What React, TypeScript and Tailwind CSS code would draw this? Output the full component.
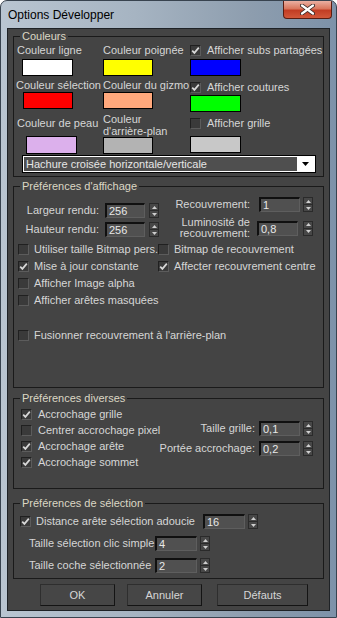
import React from 'react';

const labelCls = 'text-[#d6d6d6]';

function Check({ on }: { on?: boolean }) {
  return (
    <span className="w-[11px] h-[11px] shrink-0 border border-t-[#202020] border-l-[#202020] border-r-[#5c5c5c] border-b-[#5c5c5c] bg-[#3a3a3a] flex items-center justify-center">
      {on && (
        <svg width="9" height="9" viewBox="0 0 9 9">
          <path d="M1.2 4.6 L3.4 6.9 L7.8 1.6" stroke="#d8d8d8" strokeWidth="1.7" fill="none" />
        </svg>
      )}
    </span>
  );
}

function CheckRow({ on, text, gap = 'gap-[5px]', className = '' }: { on?: boolean; text: string; gap?: string; className?: string }) {
  return (
    <div className={`flex items-center whitespace-nowrap ${gap} ${className}`}>
      <Check on={on} />
      <span className={labelCls}>{text}</span>
    </div>
  );
}

function Spin({ className = '' }: { className?: string }) {
  return (
    <span className={`w-[10px] h-[15px] shrink-0 border border-[#2a2a2a] bg-[#474747] flex flex-col ${className}`}>
      <span className="flex-1 flex items-center justify-center border-b border-[#2a2a2a]">
        <svg width="5" height="3" viewBox="0 0 5 3"><path d="M0 3 L2.5 0 L5 3Z" fill="#cfcfcf" /></svg>
      </span>
      <span className="flex-1 flex items-center justify-center">
        <svg width="5" height="3" viewBox="0 0 5 3"><path d="M0 0 L5 0 L2.5 3Z" fill="#cfcfcf" /></svg>
      </span>
    </span>
  );
}

function Field({ value, w, className = '' }: { value: string; w: string; className?: string }) {
  return (
    <span
      className={`${w} h-[15px] shrink-0 border-t-2 border-l-2 border-r border-b border-t-[#101010] border-l-[#101010] border-r-[#5e5e5e] border-b-[#5e5e5e] bg-[#505050] text-[#e8e8e8] pl-[2px] leading-[12px] ${className}`}
    >
      {value}
    </span>
  );
}

function Swatch({ color, className = '' }: { color: string; className?: string }) {
  return <div className={`h-[17px] border border-black ${color} ${className}`} />;
}

function Group({ title, className, children }: { title: string; className: string; children: React.ReactNode }) {
  return (
    <fieldset className={`mx-[5px] border border-[#1a1a1a] ${className}`}>
      <legend className="ml-[6px] px-[2px] leading-[14px] text-[#dcd7c4]">{title}</legend>
      {children}
    </fieldset>
  );
}

function Btn({ text, w, className = '' }: { text: string; w: string; className?: string }) {
  return (
    <div
      className={`${w} h-[22px] flex items-center justify-center border border-t-[#2e2e2e] border-l-[#2e2e2e] border-r-[#141414] border-b-[#141414] bg-[#464646] text-[#d6d6d6] ${className}`}
    >
      {text}
    </div>
  );
}

export default function App() {
  return (
    <div className="w-[337px] h-[618px] rounded-t-[7px] border border-[#38434f] bg-[linear-gradient(to_right,#b9c5d1,#a6b4c2_40%,#8d9dae_75%,#7d92a9)] font-['Liberation_Sans',Arial,sans-serif] text-[11px] overflow-hidden">
      {/* title bar */}
      <div className="h-[27px] flex items-start justify-between">
        <div className="pl-[7px] pt-[7px] text-[12px] leading-[14px] text-black">Options Développer</div>
        <div className="mr-[4px] w-[49px] h-[18px] rounded-b-[4px] border border-t-0 border-[#5a1d12] bg-[linear-gradient(to_bottom,#eab0a2,#d9765d_45%,#c23d24_55%,#d2583a)] flex items-center justify-center">
          <svg width="15" height="11" viewBox="0 0 15 11">
            <path d="M2 1.5 L13 9.5 M13 1.5 L2 9.5" stroke="#3a2a28" strokeWidth="4" strokeLinecap="round" />
            <path d="M2 1.5 L13 9.5 M13 1.5 L2 9.5" stroke="#ffffff" strokeWidth="2.2" strokeLinecap="round" />
          </svg>
        </div>
      </div>

      {/* client area */}
      <div className="ml-[6px] w-[323px] h-[583px] border border-[#1e2226] bg-[#444444]">
        {/* Couleurs */}
        <Group title="Couleurs" className="h-[148px]">
          <div className="h-[111px] grid grid-cols-[87px_87px_1fr]">
            <div className="flex flex-col">
              <div className={`${labelCls} h-[13px] leading-[13px] mt-[1px] pl-[3px]`}>Couleur ligne</div>
              <Swatch color="bg-white" className="mt-[2px] ml-[8px] w-[51px]" />
              <div className={`${labelCls} h-[13px] leading-[13px] mt-[3px] pl-[2px] whitespace-nowrap`}>Couleur sélection</div>
              <Swatch color="bg-[#ff0000]" className="ml-[9px] w-[50px]" />
              <div className={`${labelCls} h-[13px] leading-[13px] mt-[8px] pl-[3px]`}>Couleur de peau</div>
              <Swatch color="bg-[#dcb0ec]" className="mt-[6px] ml-[12px] w-[51px] h-[18px]" />
            </div>
            <div className="flex flex-col">
              <div className={`${labelCls} h-[13px] leading-[13px] mt-[1px] pl-[2px] whitespace-nowrap`}>Couleur poignée</div>
              <Swatch color="bg-[#ffff00]" className="mt-[2px] ml-[2px] w-[50px]" />
              <div className={`${labelCls} h-[13px] leading-[13px] mt-[3px] pl-[2px] whitespace-nowrap`}>Couleur du gizmo</div>
              <Swatch color="bg-[#ffa87c]" className="ml-[2px] w-[50px]" />
              <div className={`${labelCls} leading-[12px] mt-[4px] pl-[2px]`}>
                Couleur
                <br />
                d'arrière-plan
              </div>
              <Swatch color="bg-[#b3b3b3]" className="mt-[0px] ml-[2px] w-[50px]" />
            </div>
            <div className="flex flex-col">
              <CheckRow on text="Afficher subs partagées" gap="gap-[6px]" className="h-[13px] mt-[1px] ml-[2px]" />
              <Swatch color="bg-[#0000ff]" className="mt-[2px] ml-[2px] w-[51px]" />
              <CheckRow on text="Afficher coutures" gap="gap-[6px]" className="h-[13px] mt-[5px] ml-[2px]" />
              <Swatch color="bg-[#00ff00]" className="mt-[1px] ml-[2px] w-[51px]" />
              <CheckRow text="Afficher grille" gap="gap-[6px]" className="h-[13px] mt-[5px] ml-[2px]" />
              <Swatch color="bg-[#c8c8c8]" className="mt-[6px] ml-[2px] w-[51px]" />
            </div>
          </div>
          <div className="mt-[1px] ml-[8px] w-[294px] h-[18px] border border-black flex">
            <div className="flex-1 border border-white border-r-0 bg-[#4f4f4f] text-[#e6e6e6] pl-[2px] leading-[14px]">
              Hachure croisée horizontale/verticale
            </div>
            <div className="w-[18px] border-y border-r border-white bg-white flex items-center justify-center">
              <svg width="7" height="4" viewBox="0 0 7 4"><path d="M0 0 L7 0 L3.5 4Z" fill="#000" /></svg>
            </div>
          </div>
        </Group>

        {/* Préférences d'affichage */}
        <Group title="Préférences d'affichage" className="mt-[2px] h-[209px]">
          <div className="flex h-[46px]">
            <div className="w-[150px] pt-[10px] flex flex-col gap-[4px]">
              <div className="flex items-center h-[15px]">
                <span className={`${labelCls} w-[85px] text-right`}>Largeur rendu:</span>
                <Field value="256" w="w-[40px]" className="ml-[6px]" />
                <Spin className="ml-[4px]" />
              </div>
              <div className="flex items-center h-[15px]">
                <span className={`${labelCls} w-[85px] text-right`}>Hauteur rendu:</span>
                <Field value="256" w="w-[40px]" className="ml-[6px]" />
                <Spin className="ml-[4px]" />
              </div>
            </div>
            <div className="pt-[4px] flex flex-col">
              <div className="flex items-center h-[15px]">
                <span className={`${labelCls} w-[86px] text-right`}>Recouvrement:</span>
                <Field value="1" w="w-[41px]" className="ml-[9px]" />
                <Spin className="ml-[3px]" />
              </div>
              <div className="flex items-center h-[22px] mt-[5px]">
                <span className={`${labelCls} w-[86px] text-right leading-[11px]`}>
                  Luminosité de
                  <br />
                  recouvrement:
                </span>
                <Field value="0,8" w="w-[41px]" className="ml-[7px]" />
                <Spin className="ml-[5px]" />
              </div>
            </div>
          </div>
          <div className="mt-[2px] grid grid-cols-[144px_1fr] auto-rows-[17px]">
            <CheckRow text="Utiliser taille Bitmap pers." className="ml-[4px]" />
            <CheckRow text="Bitmap de recouvrement" />
            <CheckRow on text="Mise à jour constante" className="ml-[4px]" />
            <CheckRow on text="Affecter recouvrement centre" />
            <CheckRow text="Afficher Image alpha" className="ml-[4px]" />
            <div />
            <CheckRow text="Afficher arêtes masquées" className="ml-[4px]" />
            <div />
          </div>
          <CheckRow text="Fusionner recouvrement à l'arrière-plan" className="ml-[4px] mt-[18px] h-[17px]" />
        </Group>

        {/* Préférences diverses */}
        <Group title="Préférences diverses" className="mt-[3px] h-[98px]">
          <div className="flex">
            <div className="w-[140px] pt-[1px] flex flex-col">
              <CheckRow on text="Accrochage grille" gap="gap-[6px]" className="ml-[7px] h-[16px]" />
              <CheckRow text="Centrer accrochage pixel" gap="gap-[6px]" className="ml-[7px] h-[16px]" />
              <CheckRow on text="Accrochage arête" gap="gap-[6px]" className="ml-[7px] h-[16px]" />
              <CheckRow on text="Accrochage sommet" gap="gap-[6px]" className="ml-[7px] h-[16px]" />
            </div>
            <div className="pt-[16px] flex flex-col gap-[5px]">
              <div className="flex items-center h-[15px]">
                <span className={`${labelCls} w-[101px] text-right`}>Taille grille:</span>
                <Field value="0,1" w="w-[41px]" className="ml-[4px]" />
                <Spin className="ml-[3px]" />
              </div>
              <div className="flex items-center h-[15px]">
                <span className={`${labelCls} w-[101px] text-right whitespace-nowrap`}>Portée accrochage:</span>
                <Field value="0,2" w="w-[41px]" className="ml-[4px]" />
                <Spin className="ml-[3px]" />
              </div>
            </div>
          </div>
        </Group>

        {/* Préférences de sélection */}
        <Group title="Préférences de sélection" className="mt-[7px] h-[83px]">
          <div className="mt-[4px] flex items-center h-[15px]">
            <span className="ml-[6px]"><Check on /></span>
            <span className={`${labelCls} ml-[5px] w-[167px] whitespace-nowrap`}>Distance arête sélection adoucie</span>
            <Field value="16" w="w-[42px]" />
            <Spin className="ml-[3px]" />
          </div>
          <div className="mt-[7px] flex items-center h-[15px]">
            <span className={`${labelCls} ml-[15px] w-[126px] whitespace-nowrap`}>Taille sélection clic simple</span>
            <Field value="4" w="w-[42px]" />
            <Spin className="ml-[3px]" />
          </div>
          <div className="mt-[7px] flex items-center h-[15px]">
            <span className={`${labelCls} ml-[15px] w-[126px] whitespace-nowrap`}>Taille coche sélectionnée</span>
            <Field value="2" w="w-[42px]" />
            <Spin className="ml-[3px]" />
          </div>
        </Group>

        {/* buttons */}
        <div className="mt-[5px] flex">
          <Btn text="OK" w="w-[75px]" className="ml-[32px]" />
          <Btn text="Annuler" w="w-[75px]" className="ml-[12px]" />
          <Btn text="Défauts" w="w-[91px]" className="ml-[15px]" />
        </div>
      </div>
    </div>
  );
}
